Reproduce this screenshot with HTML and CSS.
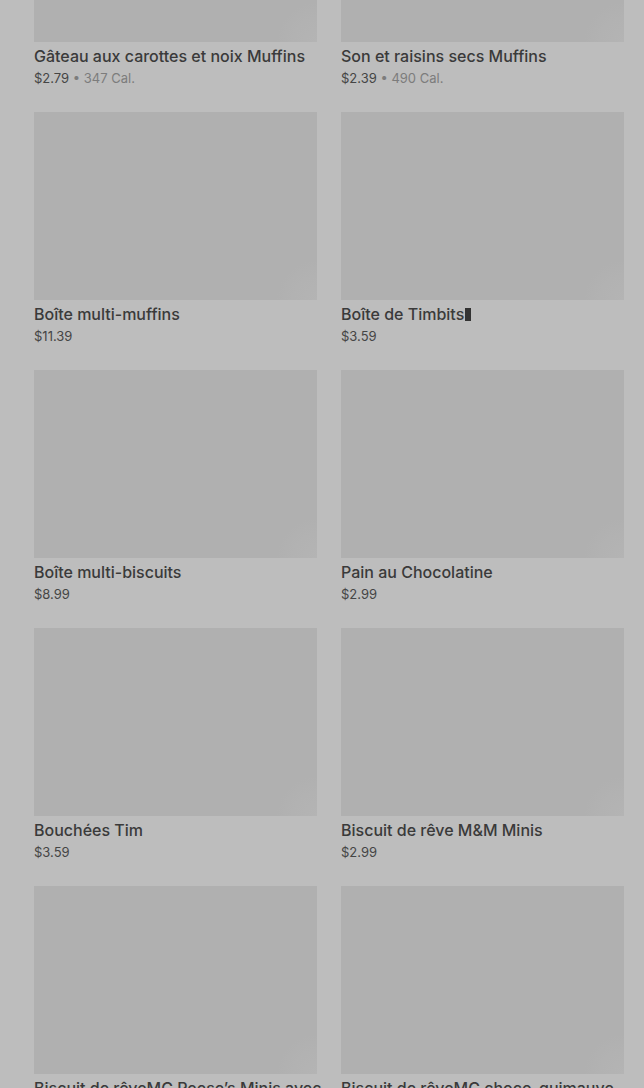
FILE: index.html
```html
<!DOCTYPE html>
<html lang="fr">
<head>
    <meta charset="UTF-8">
    <meta name="viewport" content="width=device-width, initial-scale=1.0">
    <title>Menu</title>
    <link rel="stylesheet" href="styles.css">
</head>
<body>
    <div class="grid">
        <!-- Row 1 -->
        <div class="item">
            <div class="thumb"></div>
            <div class="name">Gâteau aux carottes et noix Muffins</div>
            <div class="meta">$2.79 <span class="cal">• 347 Cal.</span></div>
        </div>
        <div class="item">
            <div class="thumb"></div>
            <div class="name">Son et raisins secs Muffins</div>
            <div class="meta">$2.39 <span class="cal">• 490 Cal.</span></div>
        </div>

        <!-- Row 2 -->
        <div class="item">
            <div class="thumb"></div>
            <div class="name">Boîte multi-muffins</div>
            <div class="meta">$11.39</div>
        </div>
        <div class="item">
            <div class="thumb"></div>
            <div class="name">Boîte de Timbits<span class="tofu"></span></div>
            <div class="meta">$3.59</div>
        </div>

        <!-- Row 3 -->
        <div class="item">
            <div class="thumb"></div>
            <div class="name">Boîte multi-biscuits</div>
            <div class="meta">$8.99</div>
        </div>
        <div class="item">
            <div class="thumb"></div>
            <div class="name">Pain au Chocolatine</div>
            <div class="meta">$2.99</div>
        </div>

        <!-- Row 4 -->
        <div class="item">
            <div class="thumb"></div>
            <div class="name">Bouchées Tim</div>
            <div class="meta">$3.59</div>
        </div>
        <div class="item">
            <div class="thumb"></div>
            <div class="name">Biscuit de rêve M&amp;M Minis</div>
            <div class="meta">$2.99</div>
        </div>

        <!-- Row 5 -->
        <div class="item">
            <div class="thumb"></div>
            <div class="name">Biscuit de rêveMC Reese’s Minis avec</div>
            <div class="meta">$2.99</div>
        </div>
        <div class="item">
            <div class="thumb"></div>
            <div class="name">Biscuit de rêveMC choco-guimauve</div>
            <div class="meta">$2.99</div>
        </div>
    </div>
</body>
</html>
```

FILE: styles.css
```css
html, body {
    margin: 0;
    padding: 0;
    background-color: #bdbdbd;
    overflow: hidden;
}
body {
    font-family: Inter, "Noto Sans", sans-serif;
    color: #3b3b3b;
}
.grid {
    display: grid;
    grid-template-columns: 283px 283px;
    column-gap: 24px;
    row-gap: 23px;
    padding: 0 20px 0 34px;
    margin-top: -146px;
}
.thumb {
    height: 188px;
    background-color: #b0b0b0;
    background-image: radial-gradient(circle at 100% 100%, #b4b4b4 0, #b2b2b2 24px, rgba(176, 176, 176, 0) 40px);
}
.name {
    margin-top: 3px;
    font-size: 16px;
    line-height: 22px;
    font-weight: 500;
    white-space: nowrap;
    color: #3a3a3a;
}
.tofu {
    display: inline-block;
    width: 6px;
    height: 13px;
    margin-left: 1px;
    background-color: #333;
    vertical-align: -1px;
}
.meta {
    font-size: 13px;
    line-height: 22px;
    color: #454545;
}
.cal {
    color: #7c7c7c;
}
```
